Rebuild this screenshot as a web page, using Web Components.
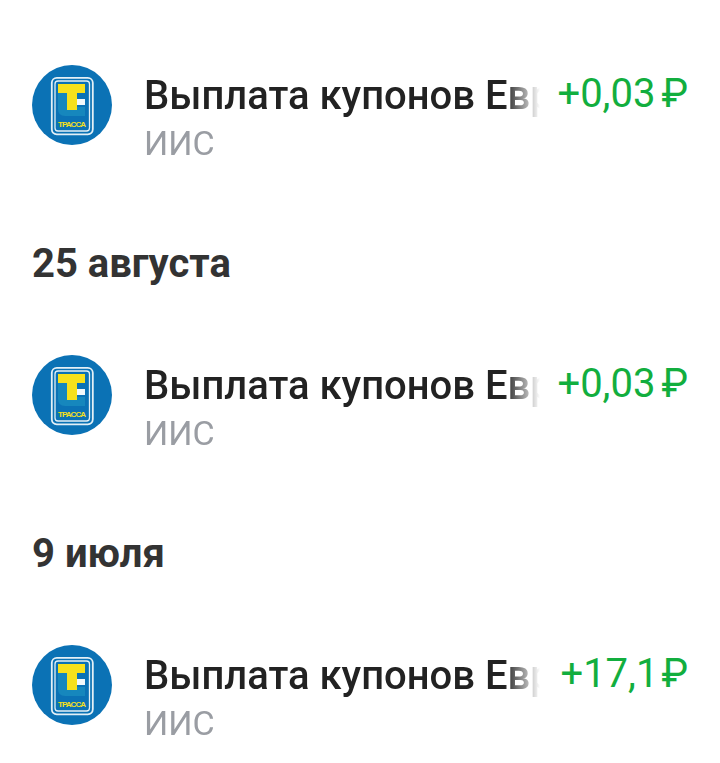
<!DOCTYPE html>
<html lang="ru">
<head>
<meta charset="utf-8">
<title>Операции</title>
<style>
    html,body{margin:0;background:#fff;}
    body{font-family:Roboto,"Noto Sans",sans-serif;overflow:hidden;height:763px;}
</style>
</head>
<body>
<history-list>
    <op-row amount="+0,03" gap="6"></op-row>
    <date-title>25 августа</date-title>
    <op-row amount="+0,03" gap="6"></op-row>
    <date-title>9 июля</date-title>
    <op-row amount="+17,1" gap="3"></op-row>
</history-list>

<script>
class HistoryList extends HTMLElement{
    constructor(){
        super();
        this.attachShadow({mode:'open'})
        this.shadowRoot.innerHTML=`
        <style>
            :host{
                display:flex;
                flex-direction:column;
                padding-top:65px;
            }
        </style>
        <slot></slot>
        `
    }
}

class DateTitle extends HTMLElement{
    constructor(){
        super();
        this.attachShadow({mode:'open'})
        this.shadowRoot.innerHTML=`
        <style>
            :host{
                display:block;
                height:210px;
                box-sizing:border-box;
                padding:96px 0 0 32px;
                font-size:40px;
                line-height:46px;
                font-weight:700;
                color:#333;
            }
        </style>
        <slot></slot>
        `
    }
}

class TrassaLogo extends HTMLElement{
    constructor(){
        super();
        this.attachShadow({mode:'open'})
        this.shadowRoot.innerHTML=`
        <style>
            :host{display:block;width:80px;height:80px;flex:none;}
            svg{display:block;}
            text{font-family:"Liberation Sans",sans-serif;font-weight:700;}
        </style>
        <svg width="80" height="80" viewBox="0 0 80 80">
            <circle cx="40" cy="40" r="40" fill="#0b72b5"/>
            <rect x="19.8" y="12.8" width="41" height="56.5" rx="5" fill="none" stroke="#e4f0f6" stroke-width="1.8"/>
            <rect x="23" y="16" width="34.5" height="50" rx="3" fill="none" stroke="#e4f0f6" stroke-width="1.3"/>
            <!-- the C behind the T -->
            <path d="M26 28h9v14h18v9H33q-7 0-7-7z" fill="#1687bd"/>
            <path d="M45 29h8v5h-8z" fill="#0b72b5"/>
            <path d="M45 34h8v6h-8z" fill="#f2f8fa"/>
            <path d="M26 19h27v9H45v17H35V28h-9z" fill="#f7e11b"/>
            <text x="40" y="62" text-anchor="middle" font-size="8" fill="#f7e11b" textLength="28">ТРАССА</text>
        </svg>
        `
    }
}

class OpRow extends HTMLElement{
    constructor(){
        super();
        this.attachShadow({mode:'open'})
    }

    render(){
        const amount = this.getAttribute('amount')??''
        const gap = this.getAttribute('gap')??0

        this.shadowRoot.innerHTML=`
        <style>
            :host{
                display:flex;
                align-items:flex-start;
                height:80px;
                padding:0 32px;
            }
            .info{
                margin-left:32px;
                padding-top:8px;
                width:396px;
                flex:none;
                overflow:hidden;
                -webkit-mask-image:linear-gradient(to right,#000 91%,transparent 100%);
                mask-image:linear-gradient(to right,#000 91%,transparent 100%);
            }
            .name{
                font-size:40px;
                line-height:46px;
                font-weight:500;
                color:#222;
                white-space:nowrap;
            }
            .sub{
                font-size:34px;
                line-height:46px;
                margin-top:1px;
                color:#9a9da3;
            }
            .amount{
                margin-left:auto;
                margin-top:6px;
                font-size:40px;
                line-height:46px;
                color:#12ae3e;
                white-space:nowrap;
            }
            .rub{margin-left:${gap}px;}
        </style>
        <trassa-logo></trassa-logo>
        <div class="info">
            <div class="name">Выплата купонов Евр</div>
            <div class="sub">ИИС</div>
        </div>
        <div class="amount">${amount}<span class="rub">₽</span></div>
        `
    }

    connectedCallback(){
        this.render()
    }
}

customElements.define('history-list',HistoryList)
customElements.define('date-title',DateTitle)
customElements.define('trassa-logo',TrassaLogo)
customElements.define('op-row',OpRow)
</script>
</body>
</html>
